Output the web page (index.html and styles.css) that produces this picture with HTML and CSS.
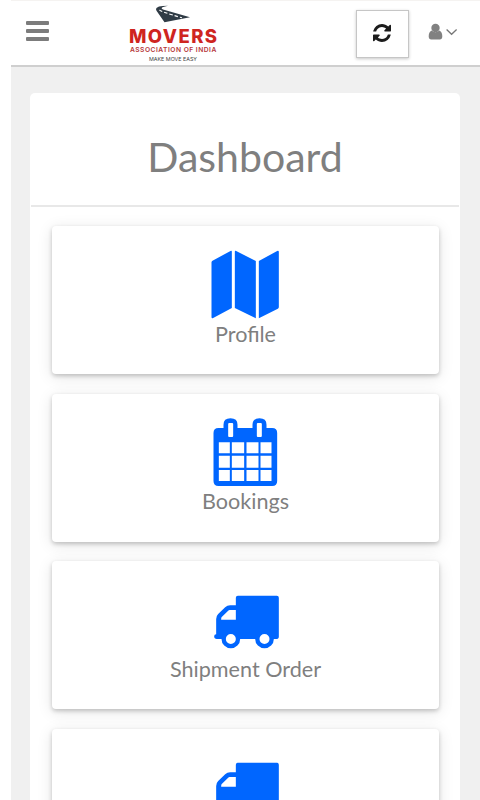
FILE: index.html
```html
<!DOCTYPE html>
<html lang="en">
<head>
<meta charset="utf-8">
<title>Dashboard</title>
<link rel="stylesheet" href="styles.css">
</head>
<body>
<div class="app">
  <header class="topbar">
    <button class="menu" aria-label="Menu"><span></span><span></span><span></span></button>
    <div class="brand">
      <svg class="road" viewBox="155 4 36 20">
        <path fill="#303c46" d="M168 5.700 Q156 5.800 156 9 Q156 10 157 11.500 L164.500 22.200 L190 17.200 L163 9.500 Q158.500 7.500 168 5.700Z"/>
        <path d="M159.500 9.800 Q160 11.500 182 17.800" fill="none" stroke="#fff" stroke-width="1.100" stroke-dasharray="3.500 2"/>
      </svg>
      <svg class="wordmark" viewBox="120 27 110 37">
        <text class="logo-name" x="129" y="42.700" textLength="88" lengthAdjust="spacing">MOVERS</text>
        <text class="logo-sub" x="130" y="51.500" textLength="86.300" lengthAdjust="spacing">ASSOCIATION OF INDIA</text>
        <text class="logo-tag" x="149" y="61.400" textLength="48" lengthAdjust="spacingAndGlyphs">MAKE MOVE EASY</text>
      </svg>
    </div>
    <button class="refresh" aria-label="Refresh">
      <svg width="18" height="18" viewBox="0 0 1536 1536"><path fill="#1c1c1c" d="M1511 928q0 5-1 7-64 268-268 434.500T764 1536q-146 0-282.500-55T238 1324l-129 129q-19 19-45 19t-45-19-19-45V960q0-26 19-45t45-19h448q26 0 45 19t19 45-19 45l-137 137q71 66 161 102t187 36q134 0 250-65t186-179q11-17 53-117 8-23 30-23h192q13 0 22.500 9.500t9.500 22.500zm25-800v448q0 26-19 45t-45 19h-448q-26 0-45-19t-19-45 19-45l138-138Q969 256 768 256q-134 0-250 65T332 500q-11 17-53 117-8 23-30 23H50q-13 0-22.500-9.500T18 608v-7q65-268 270-434.500T768 0q146 0 284 55.500T1297 212l130-129q19-19 45-19t45 19 19 45z"/></svg>
    </button>
    <svg class="user" width="30" height="18" viewBox="0 0 30 18">
      <circle cx="7.500" cy="5" r="4.200" fill="#818181"/>
      <path fill="#818181" d="M3.600 7.500 Q7.500 11 11.400 7.500 Q14.400 9 14.300 13.500 Q14.200 16.500 11.800 16.500 H3.200 Q.8 16.500 .7 13.500 Q.6 9 3.600 7.500Z"/>
      <path fill="none" stroke="#777" stroke-width="1.300" d="M18.600 6.500 L23.600 11.300 L28.600 6.500"/>
    </svg>
  </header>
  <main class="panel">
    <h1>Dashboard</h1>
    <div class="cards">
      <a class="card">
        <svg class="icon" viewBox="63.500 45 210 210"><path d="M65 82 Q65 79 68 77 L122 48 Q126 46 126 50 V219 L70 249 Q65 251 65 246Z M135 50 Q135 46 139 48 L198 78 V250 L135 219Z M207 78 L262 48 Q267 46 267 51 V216 Q267 219 264 221 L207 250Z"/></svg>
        <span>Profile</span>
      </a>
      <a class="card">
        <svg class="icon" viewBox="63.500 36 210 210"><path fill-rule="evenodd" d="M86 69 H101 V59 Q101 40 122 40 Q143 40 143 59 V69 H188 V59 Q188 40 209 40 Q230 40 230 59 V69 H247 Q262 69 262 84 V228 Q262 243 247 243 H86 Q71 243 71 228 V84 Q71 69 86 69Z M118 54 Q115 54 115 57 V93 Q115 96 118 96 H127 Q130 96 130 93 V57 Q130 54 127 54Z M204 54 Q201 54 201 57 V93 Q201 96 204 96 H213 Q216 96 216 93 V57 Q216 54 213 54Z M87 112H120V145H87Z M126 112H163V145H126Z M170 112H206V145H170Z M212 112H245V145H212Z M87 152H120V188H87Z M126 152H163V188H126Z M170 152H206V188H170Z M212 152H245V188H212Z M87 195H120V228H87Z M126 195H163V228H126Z M170 195H206V228H170Z M212 195H245V228H212Z"/></svg>
        <span>Bookings</span>
      </a>
      <a class="card">
        <svg class="icon" viewBox="183.500 15 210 210"><path id="truck" fill-rule="evenodd" d="M264 47 H381 Q387 47 387 53 V170 Q387 177 378 177 H372 A28 28 0 0 1 316 177 H271 A28 28 0 0 1 215 177 H201 Q193 177 193 169 Q193 163 199 163 V117 Q199 108 205 102 L226 82 Q232 76 241 76 H258 V53 Q258 47 264 47Z M258 90 H239 Q237 90 235 92 L215 112 Q214 114 214 119 H258Z M243 162 A15 15 0 1 0 243 192 A15 15 0 1 0 243 162Z M344 162 A15 15 0 1 0 344 192 A15 15 0 1 0 344 162Z"/></svg>
        <span>Shipment Order</span>
      </a>
      <a class="card">
        <svg class="icon" viewBox="183.500 15 210 210"><use href="#truck"/></svg>
      </a>
    </div>
  </main>
</div>
</body>
</html>
```
FILE: styles.css
```css
* { box-sizing: border-box; }
html, body { margin: 0; height: 800px; overflow: hidden; background: #fff; }
body { font-family: Lato, "Liberation Sans", sans-serif; color: #7f7f7f; }
button { padding: 0; border: 0; background: none; }

.app { height: 800px; margin-left: 11px; background: #f0f0f0; overflow: hidden; }

.topbar {
  display: flex;
  align-items: flex-start;
  height: 67px;
  background: #fff;
  border-top: 1px solid #f5f3f1;
  border-bottom: 2px solid #cfcfcf;
}
.menu { display: flex; flex-direction: column; gap: 4px; width: 23px; margin: 20px 0 0 15px; }
.menu span { height: 4px; border-radius: 1px; background: #7c7c7c; }
.brand { display: flex; flex-direction: column; width: 110px; margin: 3px 0 0 71px; }
.road { width: 36px; height: 20px; margin: 0 0 3px 35px; }
.wordmark { width: 110px; height: 37px; }
.logo-name { font: 800 18.500px Inter, sans-serif; fill: #cf251f; }
.logo-sub { font: 600 6.700px Inter, sans-serif; fill: #b5373a; }
.logo-tag { font: 400 5.300px Inter, sans-serif; fill: #444; }
.refresh {
  display: flex;
  align-items: center;
  justify-content: center;
  width: 53px;
  height: 48px;
  margin: 9px 0 0 126px;
  padding: 0 1px 2px 0;
  border: 1px solid #c6c6c6;
  box-shadow: 0 1px 3px rgba(0, 0, 0, .22);
}
.user { margin: 22px 0 0 19px; }

.panel {
  width: 430px;
  height: 760px;
  margin: 25.500px 0 0 19px;
  padding: 0 1px;
  background: #fff;
  border-radius: 5px;
}
h1 {
  height: 114px;
  margin: 0;
  border-bottom: 2px solid #e8e8e8;
  font-size: 41px;
  font-weight: 400;
  line-height: 128px;
  text-align: center;
}
.cards { display: grid; gap: 19.500px; padding: 19.500px 20px 0 21px; }
.card {
  display: flex;
  flex-direction: column;
  align-items: center;
  width: 387px;
  height: 148px;
  padding-top: 23.500px;
  background: #fff;
  border-radius: 4px;
  box-shadow: 0 2px 4px rgba(0, 0, 0, .2), 0 3px 16px rgba(0, 0, 0, .11);
}
.icon { width: 70px; height: 70px; fill: #0066ff; }
.card span { font-size: 21.600px; line-height: 28.500px; }
```
